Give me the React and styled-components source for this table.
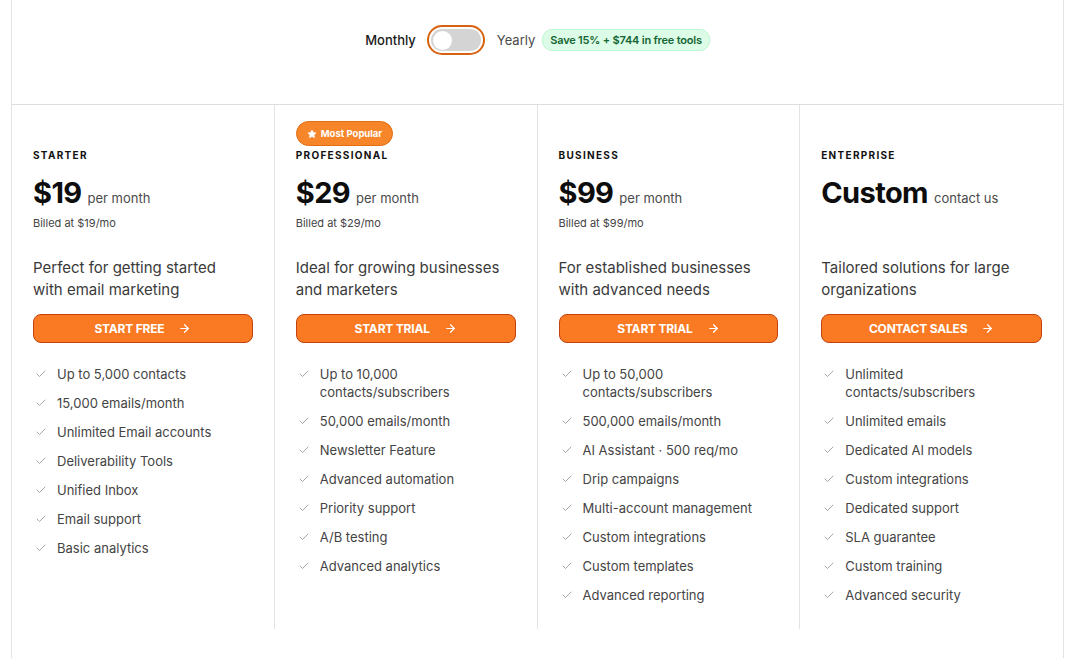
import React from 'react';
import styled, { createGlobalStyle } from 'styled-components';
import { Check, ArrowRight, Star } from 'lucide-react';

const GlobalStyle = createGlobalStyle`
  body {
    margin: 0;
    background: #fff;
    font-family: Inter, "Noto Sans", sans-serif;
    color: #1a1a1a;
  }
`;

const plans = [
  {
    name: 'STARTER',
    price: '$19',
    unit: 'per month',
    billed: 'Billed at $19/mo',
    desc: 'Perfect for getting started with email marketing',
    cta: 'START FREE',
    features: [
      'Up to 5,000 contacts',
      '15,000 emails/month',
      'Unlimited Email accounts',
      'Deliverability Tools',
      'Unified Inbox',
      'Email support',
      'Basic analytics',
    ],
  },
  {
    name: 'PROFESSIONAL',
    popular: true,
    price: '$29',
    unit: 'per month',
    billed: 'Billed at $29/mo',
    desc: 'Ideal for growing businesses and marketers',
    cta: 'START TRIAL',
    features: [
      'Up to 10,000 contacts/subscribers',
      '50,000 emails/month',
      'Newsletter Feature',
      'Advanced automation',
      'Priority support',
      'A/B testing',
      'Advanced analytics',
    ],
  },
  {
    name: 'BUSINESS',
    price: '$99',
    unit: 'per month',
    billed: 'Billed at $99/mo',
    desc: 'For established businesses with advanced needs',
    cta: 'START TRIAL',
    features: [
      'Up to 50,000 contacts/subscribers',
      '500,000 emails/month',
      'AI Assistant · 500 req/mo',
      'Drip campaigns',
      'Multi-account management',
      'Custom integrations',
      'Custom templates',
      'Advanced reporting',
    ],
  },
  {
    name: 'ENTERPRISE',
    price: 'Custom',
    unit: 'contact us',
    desc: 'Tailored solutions for large organizations',
    cta: 'CONTACT SALES',
    features: [
      'Unlimited contacts/subscribers',
      'Unlimited emails',
      'Dedicated AI models',
      'Custom integrations',
      'Dedicated support',
      'SLA guarantee',
      'Custom training',
      'Advanced security',
    ],
  },
];

const Frame = styled.div`
  margin: 0 6px 0 11px;
  min-height: 658px;
  border-left: 1px solid #e3e3e3;
  border-right: 1px solid #e3e3e3;
`;

const Header = styled.div`
  height: 105px;
  box-sizing: border-box;
  padding-top: 25px;
  display: flex;
  justify-content: center;
  align-items: flex-start;
  border-bottom: 1px solid #dedede;
`;

const ToggleRow = styled.div`
  display: flex;
  align-items: center;
  height: 30px;
`;

const Label = styled.span`
  font-size: 13px;
  font-weight: ${({ $active }) => ($active ? 500 : 400)};
  color: ${({ $active }) => ($active ? '#1a1a1a' : '#4a4a4a')};
`;

const Switch = styled.div`
  width: 58px;
  height: 30px;
  box-sizing: border-box;
  border: 2px solid #d6630f;
  border-radius: 15px;
  padding: 2px;
  margin: 0 12px 0 11px;
  background: #fff;
`;

const Track = styled.div`
  height: 100%;
  border-radius: 12px;
  background: #d4d4d4;
  display: flex;
  align-items: center;
  padding: 0 2px;
`;

const Knob = styled.div`
  width: 19px;
  height: 19px;
  border-radius: 50%;
  background: #fff;
`;

const SaveBadge = styled.span`
  margin-left: 7px;
  padding: 3px 7px;
  border-radius: 10px;
  background: #dcfce7;
  border: 1px solid #bbf7d0;
  color: #166534;
  font-size: 11px;
  font-weight: 600;
  letter-spacing: -0.2px;
`;

const Grid = styled.div`
  display: grid;
  grid-template-columns: repeat(4, 1fr);
  align-items: start;
`;

const Column = styled.div`
  padding: 16px 21px 24px;
  min-height: 524px;
  box-sizing: border-box;
  border-right: ${({ $last }) => ($last ? 'none' : '1px solid #e3e3e3')};
  align-self: stretch;
`;

const BadgeSlot = styled.div`
  height: 25px;
  margin-bottom: 2px;
`;

const Popular = styled.span`
  display: inline-flex;
  align-items: center;
  gap: 4px;
  height: 25px;
  padding: 0 10px;
  box-sizing: border-box;
  border-radius: 13px;
  background: #f7852a;
  border: 1px solid #e36d12;
  color: #fff;
  font-size: 9.5px;
  font-weight: 700;
`;

const PlanName = styled.div`
  font-size: 10px;
  font-weight: 700;
  letter-spacing: 1.3px;
  color: #111;
  line-height: 14px;
`;

const PriceRow = styled.div`
  display: flex;
  align-items: baseline;
  gap: 6px;
  margin-top: 14px;
  line-height: 34px;
`;

const Price = styled.span`
  font-size: 29px;
  font-weight: 700;
  color: #0d0d0d;
  letter-spacing: -0.6px;
`;

const Unit = styled.span`
  font-size: 13px;
  color: #4a4a4a;
`;

const Billed = styled.div`
  font-size: 11px;
  color: #444;
  height: 16px;
  line-height: 16px;
`;

const Desc = styled.p`
  margin: 26px 0 0;
  max-width: 210px;
  font-size: 15px;
  line-height: 22px;
  color: #3a3a3a;
`;

const Button = styled.button`
  margin-top: 13px;
  width: 100%;
  height: 29px;
  display: flex;
  align-items: center;
  justify-content: center;
  gap: 14px;
  background: #f97a22;
  border: 1px solid #c2410c;
  border-radius: 8px;
  color: #fff;
  font-family: inherit;
  font-size: 12px;
  font-weight: 700;
  letter-spacing: -0.2px;
  cursor: pointer;
`;

const Features = styled.ul`
  list-style: none;
  margin: 22px 0 0;
  padding: 0;
  display: flex;
  flex-direction: column;
  gap: 11px;
`;

const Feature = styled.li`
  display: flex;
  gap: 10px;
  font-size: 13px;
  line-height: 18px;
  color: #444;
  span {
    max-width: 184px;
  }
  svg {
    flex: none;
    margin: 3px 0 0 2px;
    color: #8a8a8a;
  }
`;

function PlanColumn({ plan, last }) {
  return (
    <Column $last={last}>
      <BadgeSlot>
        {plan.popular && (
          <Popular>
            <Star size={10} fill="#fff" strokeWidth={1} />
            Most Popular
          </Popular>
        )}
      </BadgeSlot>
      <PlanName>{plan.name}</PlanName>
      <PriceRow>
        <Price>{plan.price}</Price>
        <Unit>{plan.unit}</Unit>
      </PriceRow>
      <Billed>{plan.billed}</Billed>
      <Desc>{plan.desc}</Desc>
      <Button>
        {plan.cta}
        <ArrowRight size={13} strokeWidth={2.2} />
      </Button>
      <Features>
        {plan.features.map((f) => (
          <Feature key={f}>
            <Check size={12} strokeWidth={1.5} />
            <span>{f}</span>
          </Feature>
        ))}
      </Features>
    </Column>
  );
}

export default function App() {
  return (
    <>
      <GlobalStyle />
      <Frame>
        <Header>
          <ToggleRow>
            <Label $active>Monthly</Label>
            <Switch>
              <Track>
                <Knob />
              </Track>
            </Switch>
            <Label>Yearly</Label>
            <SaveBadge>Save 15% + $744 in free tools</SaveBadge>
          </ToggleRow>
        </Header>
        <Grid>
          {plans.map((p, i) => (
            <PlanColumn key={p.name} plan={p} last={i === plans.length - 1} />
          ))}
        </Grid>
      </Frame>
    </>
  );
}
